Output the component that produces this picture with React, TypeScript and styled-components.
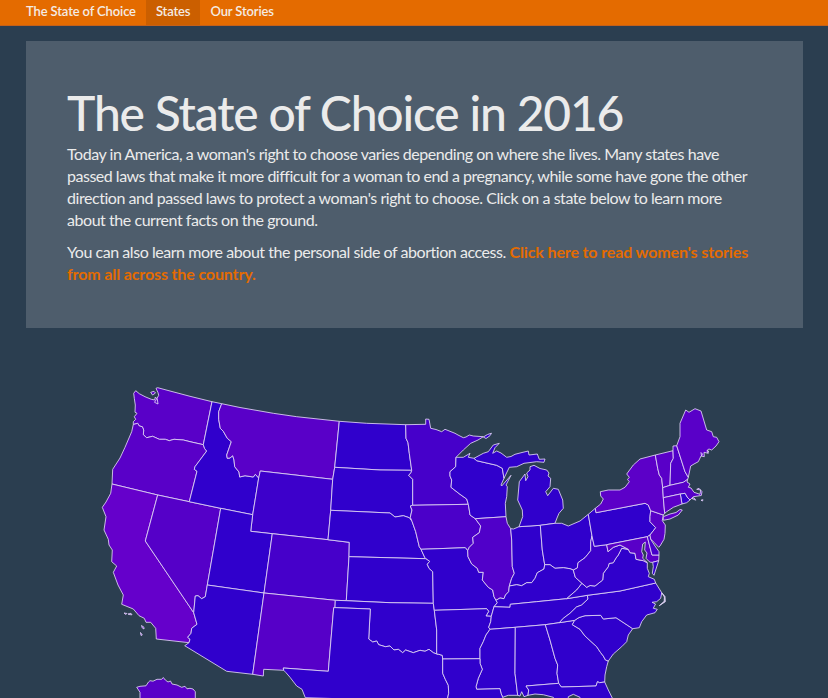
import React from "react";
import styled, { createGlobalStyle } from "styled-components";

const GlobalStyle = createGlobalStyle`
  * { box-sizing: border-box; }
  html, body { margin: 0; padding: 0; }
  body {
    background: #2b3e50;
    color: #ebebeb;
    font-family: Lato, "Liberation Sans", sans-serif;
    overflow: hidden;
  }
`;

const Page = styled.div`
  display: flex;
  flex-direction: column;
  width: 828px;
  height: 698px;
  overflow: hidden;
`;

const NavBar = styled.nav`
  display: flex;
  flex: none;
  height: 26px;
  padding-left: 16px;
  background: #e46b00;
  border-bottom: 1px solid #c4601a;
`;

const NavLink = styled.a<{ $active?: boolean }>`
  display: flex;
  align-items: center;
  height: 25px;
  padding: 0 10px 3px;
  font-size: 13px;
  font-weight: 600;
  letter-spacing: -0.13px;
  color: #f4ebe4;
  text-decoration: none;
  white-space: nowrap;
  background: ${(p) => (p.$active ? "#cb5f00" : "transparent")};
`;

const Jumbotron = styled.header`
  flex: none;
  width: 777px;
  height: 287px;
  margin: 15px 0 0 26px;
  padding: 47px 41px 0;
  background: #4e5d6c;
`;

const Title = styled.h1`
  margin: 0;
  font-size: 48px;
  line-height: 50px;
  font-weight: 500;
  letter-spacing: -1.18px;
  white-space: nowrap;
`;

const Lead = styled.p`
  margin: 0 0 11px;
  font-size: 16px;
  line-height: 21.7px;
  font-weight: 400;
  letter-spacing: -0.45px;
  &:first-of-type { margin-top: 5.4px; }
`;

const Line = styled.span<{ $tight?: boolean }>`
  display: block;
  white-space: nowrap;
  ${(p) => (p.$tight ? "letter-spacing: -0.49px;" : "")}
`;

const StoriesLink = styled.a`
  color: #e46b00;
  font-weight: 700;
  letter-spacing: -0.13px;
  text-decoration: none;
`;

const MapSvg = styled.svg`
  display: block;
  flex: none;
  width: 828px;
  height: 370px;
`;

/* Shared borders and coastlines; each state is a chain of these, "-" meaning reversed. */
const arcs: Record<string, string> = {
  waCoast: "133.3,424.5 133.3,421.7 135.7,419.3 134.3,416.7 137,413.3 135,412.3 135.3,405 134.3,398.3 133.7,393.3 135.7,390.7 139.3,393.7 145,396.7 151.3,399.3 154.7,400 155.3,397 157.3,399 158,404 154.5,402.3 156.3,399.5 158.7,395.3 158,392.7 156,388.3 157.7,387.7",
  waTop: "157.7,387.7 170,391 190,396.3 212,401.7",
  waId: "212,401.7 203.3,444.7",
  waOr: "133.3,424.5 137.7,423.3 139.3,426 142.3,426.7 143.7,430 143.3,434.7 146.7,437.7 152.7,436.3 159.3,439.3 165.3,439.3 169.3,440.7 174,439.3 183.3,440 190,441.7 203.3,444.7",
  orCoast: "133.3,424.5 131.7,431.7 125,447.3 120,458 112.7,469.3 112,484",
  orCa: "112,484 157.7,495",
  orNv: "157.7,495 189.3,501.7",
  orId: "203.3,444.7 204.7,448.7 206.7,451 200,460 195,466.7 194.3,469.3 197,471.3 189.3,501.7",
  idTop: "212,401.7 221.7,403.7",
  idMt: "221.7,403.7 218.7,411.7 218.7,419.3 220.3,428.3 223.3,431.3 227.3,438.3 231.3,441.7 226.7,455 227.3,458.3 230,458 232.7,455.7 234,460 234.7,466.7 239,472 239.7,477 245,475.7 253.3,477 255.3,474.3 258.7,478",
  mtWy: "258.7,478 260.3,471 332.7,479.3",
  idWy: "258.7,478 252.7,514.7",
  idNv: "189.3,501.7 220.7,508.3",
  idUt: "220.7,508.3 252.7,514.7",
  utWy: "252.7,514.7 250.7,531.3 272.3,533.7",
  wyCo: "272.3,533.7 328,539.7",
  mtTop: "221.7,403.7 240,407.5 273.3,413.3 296.7,416.7 339.3,421.3",
  mtNd: "339.3,421.3 334.7,467.3",
  mtSd: "334.7,467.3 332.7,479.3",
  wySd: "332.7,479.3 330.7,510.3",
  wyNe: "330.7,510.3 328,539.7",
  ndTop: "339.3,421.3 366.7,423.3 405.7,424.7",
  ndSd: "334.7,467.3 380,470 411.7,470.3",
  ndMn: "405.7,424.7 406,438.3 408,442.7 409.3,453.3 411.7,470.3",
  sdMn: "411.7,470.3 411,472.7 408.7,475.3 412.7,479.3 412.7,505.3",
  sdIa: "412.7,505.3 410.3,506 412,510 410.3,517.3 412,521.3",
  sdNe: "330.7,510.3 390,513 395,517 403.3,515.7 409.3,517.7 412,521.3",
  neIa: "412,521.3 415.7,531.7 419.3,546.7 421,549.3",
  neMo: "421,549.3 424.7,557.3 426,558.7",
  neCo: "328,539.7 349.3,542.3 349,556.7",
  neKs: "349,556.7 426,558.7",
  coKs: "349,556.7 346.3,600.7",
  ksMo: "426,558.7 429.7,561.3 427.3,564.3 429,568.3 432.7,571.7 433.3,603.3",
  ksOk: "346.3,600.7 390,602.7 433.3,603.3",
  coNm: "264,593 335.3,600.3",
  coOk: "335.3,600.3 346.3,600.7",
  utCo: "272.3,533.7 264,593",
  azNm: "264,593 252.7,674.3",
  nmOk: "335.3,600.3 335,607.6",
  nmTx: "335,607.6 333.7,607.7 328.3,671.3 283.3,668 283.7,670.3",
  nmSouth: "283.7,670.3 263.7,669.3 263.3,676 252.7,674.3",
  okTx: "335,607.6 370.3,609 368.7,639 372.7,642 376.7,641 378.7,644.7 385.3,646.7 390,646 394,650 398.3,649.3 402.7,652.7 405.7,650 413.3,652.7 420,650.3 425,651.3 429,649.3 433.3,652.7 436.7,654",
  okMo: "433.3,603.3 434.3,610.3",
  okAr: "434.3,610.3 436.7,630 436.7,654",
  txAr: "436.7,654 438.7,654.3 442.3,655.3 442.7,659",
  txLa: "442.7,659 442.7,673.3 445.3,679.3 448.3,685.3 448.7,693.3 446.7,702",
  txCoast: "283.7,670.3 286,672.7 290,677.3 296.7,686 302,689.3 305.3,697.7 306,702",
  moAr: "434.3,610.3 486.7,608.7 488.7,611.3 486,616 491.3,616.3",
  arLa: "442.7,659 480,658.7",
  arTn: "491.3,616.3 490.7,621.7 488.7,627.3 490,629.3",
  arMs: "490,629.3 486,635 483.3,641.7 480,648.3 480,658.7",
  msLa: "480,658.7 480,663.3 482.3,669.3 478.3,678.3 476,686.7 476.7,689.3 500,688.7 501,693.3 502.7,697.3",
  msAl: "515.3,627.3 515,673.3 517.7,695.3",
  msCoast: "502.7,697.3 508.3,695.3 517.7,695.3",
  tnMs: "490,629.3 515.3,627.3",
  tnAl: "515.3,627.3 545.3,624.7",
  tnGa: "545.3,624.7 559.3,622.7",
  alGa: "545.3,624.7 550,640 555,658.3 557.7,665 557,673.3 558.7,683.3",
  alFl: "558.7,683.3 526,686 528.7,690 528,695.3",
  alCoast: "517.7,695.3 520,696 521.7,691.7 524,696.7 528,695.3",
  gaFl: "558.7,683.3 561.3,687 596,686 597.5,681.7 599.5,682.7 604.7,682",
  gaCoast: "608.3,661 606.7,666.7 605,675 604.7,682",
  flCoast: "604.7,682 608.3,690 612.3,698 614,703 580,703 580,697.3 573.3,694.3 568.3,696.7 568,703 556,703 553.3,697.3 543.3,694.7 535,694 528,695.3",
  iaMo: "421,549.3 465.3,547.7 467.7,550.7",
  moIl: "467.7,550.7 468,556.7 471.7,564 477.3,568.3 478.7,572.3 483.3,572.3 482.3,580 488.3,587.3 492.7,590 494,596.7 496,600.3",
  moKy: "496,600.3 497.3,602.7 494,606.7",
  moTn: "494,606.7 491.3,616.3",
  ilKy: "496,600.3 500,598 504,598.7 505.5,595 508.7,591.7 509.3,586",
  ilIn: "510.7,528.7 511.7,540 512.3,566.7 514.3,573.3 511.7,578.3 509.3,586",
  inKy: "509.3,586 516.7,584.7 521.7,585.7 526.7,582.7 531.7,582.7 535,578.3 537.3,572.7 544,569 544.7,564.7",
  inOh: "540.3,525.3 542.3,550 544.7,564.7",
  ohKy: "544.7,564.7 550,564.7 555,568.3 563.3,567.7 570,568.7 573.3,570",
  ohWv: "573.3,570 577.3,568 578,562.7 585,557.7 590.7,550.7 590.7,541.7 592,536",
  ohPa: "588.3,514.3 592,536",
  paWv: "592,536 594.3,546.3 606.7,544.7",
  paMd: "606.7,544.7 647.3,536.7",
  paDe: "647.3,536.7 650,535",
  kyWv: "573.3,570 575.3,577.3 582,583.3",
  kyVa: "582,583.3 576.7,590 572,594 566.7,598.7",
  kyTn: "494,606.7 510,607.3 510.3,604.3 536.7,601.7 566.7,598.7",
  tnVa: "566.7,598.7 587.3,595.3",
  vaNc: "587.3,595.3 620,591 655.7,583",
  tnNc: "587.3,595.3 588,599 581.7,605 576.5,607 570,613.3 563.3,618.3 559.3,622.7",
  gaNc: "559.3,622.7 574.7,620.3",
  ncSc: "574.7,620.3 579,617.5 585,615.7 600.7,615.3 603.3,619 616,617.7 632.7,628.7",
  gaSc: "574.7,620.3 572.3,624.7 580,629.3 585,636 596.7,646.7 600.7,652.7 603.3,656 605.5,660 608.3,661",
  scCoast: "632.7,628.7 628.3,635 626.7,641.7 621.7,646.7 613.3,654 608.3,661",
  ncCoast: "655.7,583 661.7,592.7 660.7,598.3 656.7,601.7 652,602.3 655.5,604 653.3,608.3 657.3,609.3 655,612.7 646.7,615 641.7,621.7 639.3,627.7 632.7,628.7",
  wvVa: "582,583.3 586.7,587.3 590,585.5 595,586 602.7,580 603.3,573.3 608.3,566.7 609,563.5 613.3,562.7 616,558 618.3,555 621.7,548.3 628.3,549.3",
  wvMd: "606.7,544.7 608,551.7 613.3,547.3 620,545 628.3,549.3",
  mdVa: "628.3,549.3 630,552.7 635,553.3 636,559.3 643.3,560.7 647.3,562.7",
  bay: "647.3,562.7 642.7,558.3 643.3,555 641.7,551.7 642.7,544 645.3,542 644.7,550 647,553 646,558.3 649.3,561.7 650.7,562.3",
  mdDe: "647.3,536.7 652,555 659,555",
  deCoast: "650,535 650.7,539.3 655,546 659,551.7 659,555",
  mdCoast: "659,555 658.7,560.7",
  mdVaShore: "658.7,560.7 652.7,562.3 650.7,562.3",
  vaCoast: "647.3,562.7 647.3,568.3 649.3,573.3 648.3,576.7 654.3,579.3 655.7,583",
  paNj: "650.7,510.7 650,516.7 650,521.7 655.7,527.7 650,535",
  njNy: "650.7,510.7 663.3,515",
  njCoast: "663.3,515 662.3,520.7 665.3,525 665,533.3 664,539.3 660,546 658.7,547.3 654.3,542.7 650.7,539 650,535",
  nyPa: "596,512.7 645,503.3 648.3,505 650.7,510.7",
  paLake: "588.3,514.3 595.3,508.3 596,512.7",
  nyLake: "596,512.7 595.3,508.3 600.7,504 603.3,499 600.7,496 600.3,491.7 608.3,490 620,490 625,487.3 629.3,481.7 627.5,479.5 629.3,477.3 626.7,474 633.3,465 640,459 655.3,455",
  nyVt: "655.3,455 657.7,468.3 659.3,475 661.7,478.3 662.7,487.7",
  nyMa: "662.7,487.7 663.3,497.7",
  nyCt: "663.3,497.7 664.7,513.3",
  nyTip: "664.7,513.3 663.3,515",
  vtTop: "655.3,455 673,450.7",
  vtNh: "673,450.7 673.3,458.3 670.7,463.3 670,485.3",
  vtMa: "662.7,487.7 670,485.3",
  nhMa: "670,485.3 683.3,482.3 687.7,479.3",
  nhTop: "673,450.7 673,446 676.7,445.7",
  nhMe: "676.7,445.7 685,471.7 688.3,477.3",
  nhCoast: "688.3,477.3 687.7,479.3",
  meCoast: "676.7,445.7 680,436.7 680,423.3 685.7,410 689,412.3 695,408.7 701,411 706.7,430 711.7,431.7 713.3,436.7 716.7,437.3 719,441.7 716,446 711.7,450 709,449 707.3,450 708.3,453.3 704,452.3 704.3,456.7 701,456 698.3,461.7 694,464 690.7,466 688.3,477.3",
  maCoast: "687.7,479.3 687,482 690,484 688.3,487.3 691,488 694,492.3 700,494.3 700.7,490 696.7,489.3 699,488.3 702,491.7 701.3,495.5 693.3,496.7 690,500",
  maCt: "663.3,497.7 680.3,494",
  maRi: "680.3,494 685,493.3 687,497 690,500",
  riCt: "680.3,494 682,504",
  riCoast: "690,500 686.7,502.7 682,504",
  ctCoast: "682,504 673.3,507.3 666.7,511.7 664.7,513.3",
  ilWi: "475.3,518.7 506,516.7",
  wiLake: "506,516.7 505.3,503.3 506.7,496.7 507.3,486.7 506,485 511,475.3 501.7,486 501,485 504,478.3",
  wiMi: "504,478.3 502.3,468.3 496.7,465.3 476.7,460.7 474,458.3",
  wiSup: "474,458.3 468.3,457.3 470,453.3 463.3,457.3 456,457.3",
  wiMn: "456,457.3 455.7,466.7 450,471.7 450,476 451.7,480 451,487.3 460,494.3 466.7,499 468.3,504.3",
  wiIa: "468.3,504.3 469.3,510 470,515 475.3,518.7",
  iaIl: "475.3,518.7 480.7,526 479.3,532.7 472.7,537.3 473.3,543.3 469.3,547.3 467.7,550.7",
  iaMn: "412.7,505.3 468.3,504.3",
  mnTop: "405.7,424.7 425.7,424.3 425.7,419 429,419.3 430.7,428.3 436,429.5 441.7,431.7 445,429.3 455,433.3 458,435 463.3,437.7 466,437 469.3,435 473.3,436 483.3,436.7 478,440 470.7,443.3 463.3,450 456,457.3",
  miUpper: "474,458.3 483.3,453.3 488.3,451.7 493.3,445 499.3,443.3 495,447.7 492.7,453.3 496.7,451 501,453 506.7,457.3 511,456.5 515,454.3 522,452.5 528.3,451 529,455 537.3,454 539.3,459.3 545,459 544,462.3 536.7,461.7 524,463.3 516.7,466.7 509.3,467.3 504,478.3",
  miLower: "519,526.7 522.7,516.7 522.3,510 517.7,500 519.3,481.7 525,474 525.7,480.7 528,476.7 526.7,473 530,470 530,466.7 534,465.3 540,468.5 546.7,470 549,473 548,476 550.7,478.3 550,486.7 545.7,491.7 547.7,495.7 553.3,488.3 558.3,489.3 562.7,500 563.3,508.3 559,513.3 557,518 555,523.3",
  miIn: "519,526.7 540.3,525.3",
  miOh: "540.3,525.3 555,523.3",
  inLake: "510.7,528.7 513.5,529 519,526.7",
  ilLake: "506,516.7 507.3,523.3 510.7,528.7",
  ohLake: "555,523.3 561.7,523.3 568.3,526 580,521 588.3,514.3",
  caCoast: "112,484 110.7,493.3 106,502 102.3,507.3 106,516.7 104,530 108.3,539.3 109,545 112.3,550 111.7,561.7 116.7,566 113.3,572.3 118,585 123.3,595 121.7,604.3 133.3,609 139,615.7 144.3,618.3 146,622.3 150.7,622.3 155.7,628.3 156.3,639 189,642.7",
  caNv: "157.7,495 145.3,541 193.7,612.7",
  caAz: "193.7,612.7 197,624.3 191.7,628.3 191,633.3 187.7,637.3 190,639.3 189,642.7",
  nvAz: "193.7,612.7 195.3,596 198,595.7 201.7,598.7 205.3,596.7 207.3,585",
  nvUt: "220.7,508.3 207.3,585",
  utAz: "207.3,585 264,593",
  azSouth: "189,642.7 184.7,645.7 226.7,671.3 252.7,674.3",
};

const BLUE = "#3000cc";

const states: { id: string; fill: string; ring: string }[] = [
  { id: "WA", fill: "#5900c8", ring: "waCoast waTop waId -waOr" },
  { id: "OR", fill: "#5900c8", ring: "waOr orId -orNv -orCa -orCoast" },
  { id: "CA", fill: "#6500cb", ring: "orCa caNv caAz -caCoast" },
  { id: "NV", fill: "#5500c8", ring: "orNv idNv nvUt -nvAz -caNv" },
  { id: "ID", fill: BLUE, ring: "idTop idMt idWy -idUt -idNv -orId -waId" },
  { id: "MT", fill: "#5900c8", ring: "mtTop mtNd mtSd -mtWy -idMt" },
  { id: "WY", fill: "#3d00cb", ring: "mtWy wySd wyNe -wyCo -utWy -idWy" },
  { id: "UT", fill: BLUE, ring: "idUt utWy utCo -utAz -nvUt" },
  { id: "AZ", fill: BLUE, ring: "utAz azNm -azSouth -caAz nvAz" },
  { id: "CO", fill: "#4600ca", ring: "wyCo neCo coKs -coOk -coNm -utCo" },
  { id: "NM", fill: "#5600c8", ring: "coNm nmOk nmTx nmSouth -azNm" },
  { id: "ND", fill: BLUE, ring: "ndTop ndMn -ndSd -mtNd" },
  { id: "SD", fill: BLUE, ring: "ndSd sdMn sdIa -sdNe -wySd -mtSd" },
  { id: "NE", fill: BLUE, ring: "sdNe neIa neMo -neKs -neCo -wyNe" },
  { id: "KS", fill: BLUE, ring: "neKs ksMo -ksOk -coKs" },
  { id: "OK", fill: BLUE, ring: "coOk ksOk okMo okAr -okTx -nmOk" },
  { id: "TX", fill: BLUE, ring: "okTx txAr txLa -txCoast -nmTx" },
  { id: "MN", fill: "#4600ca", ring: "mnTop wiMn -iaMn -sdMn -ndMn" },
  { id: "IA", fill: "#4b00c9", ring: "iaMn wiIa iaIl -iaMo -neIa -sdIa" },
  { id: "MO", fill: BLUE, ring: "iaMo moIl moKy moTn -moAr -okMo -ksMo -neMo" },
  { id: "AR", fill: BLUE, ring: "moAr arTn arMs -arLa -txAr -okAr" },
  { id: "WI", fill: BLUE, ring: "-wiSup -wiMi -wiLake -ilWi -wiIa -wiMn" },
  { id: "IL", fill: "#5000c9", ring: "ilWi ilLake ilIn -ilKy -moIl -iaIl" },
  { id: "IN", fill: BLUE, ring: "inLake miIn inOh -inKy -ilIn" },
  { id: "MI-U", fill: BLUE, ring: "miUpper wiMi" },
  { id: "MI-L", fill: BLUE, ring: "miLower -miOh -miIn" },
  { id: "OH", fill: BLUE, ring: "miOh ohLake ohPa -ohWv -ohKy -inOh" },
  { id: "KY", fill: BLUE, ring: "inKy ohKy kyWv kyVa -kyTn -moKy ilKy" },
  { id: "TN", fill: BLUE, ring: "kyTn tnVa tnNc -tnGa -tnAl -tnMs -arTn -moTn" },
  { id: "MS", fill: BLUE, ring: "tnMs msAl -msCoast -msLa -arMs" },
  { id: "AL", fill: BLUE, ring: "tnAl alGa alFl -alCoast -msAl" },
  { id: "GA", fill: BLUE, ring: "tnGa gaNc gaSc gaCoast -gaFl -alGa" },
  { id: "FL", fill: BLUE, ring: "gaFl flCoast -alFl" },
  { id: "SC", fill: BLUE, ring: "ncSc scCoast -gaSc" },
  { id: "NC", fill: BLUE, ring: "vaNc ncCoast -ncSc -gaNc -tnNc" },
  { id: "VA", fill: BLUE, ring: "wvVa mdVa vaCoast -vaNc -tnVa -kyVa" },
  { id: "WV", fill: "#3d00cb", ring: "paWv wvMd -wvVa -kyWv ohWv" },
  { id: "PA", fill: BLUE, ring: "paLake nyPa paNj -paDe -paMd -paWv -ohPa" },
  { id: "MD", fill: "#5900c8", ring: "paMd mdDe mdCoast mdVaShore -bay -mdVa -wvMd" },
  { id: "DE", fill: "#4600ca", ring: "paDe deCoast -mdDe" },
  { id: "NJ", fill: "#5900c8", ring: "njNy njCoast -paNj" },
  { id: "NY", fill: "#5c00c8", ring: "nyLake nyVt nyMa nyCt nyTip -njNy -nyPa" },
  { id: "VT", fill: "#5900c8", ring: "vtTop vtNh -vtMa -nyVt" },
  { id: "NH", fill: "#5000c9", ring: "nhTop nhMe nhCoast -nhMa -vtNh" },
  { id: "ME", fill: "#5900c8", ring: "meCoast -nhMe" },
  { id: "MA", fill: "#5600c8", ring: "vtMa nhMa maCoast -maRi -maCt -nyMa" },
  { id: "RI", fill: BLUE, ring: "maRi riCoast -riCt" },
  { id: "CT", fill: "#5c00c8", ring: "maCt riCt ctCoast -nyCt" },
];

const louisiana = "M442.7,659L480,658.7L480,663.3L482.3,669.3L478.3,678.3L476,686.7L476.7,689.3L500,688.7L501,693.3L502.7,697.3L504,703L446.7,702L448.7,693.3L448.3,685.3L445.3,679.3L442.7,673.3Z";

const islands: { d: string; fill: string }[] = [
  { fill: "#5900c8", d: "M140,703L140,697L140,692.3L138.5,690L136.7,687.3L140,686.3L146,685.8L148.5,682L150,680.7L153,681.2L157,679.3L161.7,679.3L163.3,677.5L165.3,680L168,682L170.5,681L172,684L177,685L181.7,687.3L185,686.3L187,688.8L190,688.3L193,689L195.3,691.7L195.3,703Z" },
  { fill: "#5c00c8", d: "M663.3,516.7L670,514L676,512.5L680,509.5L682.3,510L678.3,515L670,519L663.3,520.3Z" },
  { fill: BLUE, d: "M658.7,560.7L655.7,570L654,575.3L652.3,573.3L653.3,566.7L652.7,562.3Z" },
  { fill: "#6500cb", d: "M124,613L127,613.5L126,614.5ZM128,614L131,613.3L132,614.8L129,614.5Z" },
  { fill: "#6500cb", d: "M141.5,625.5L144,627.3L144,629L142.3,628ZM140.5,632.5L142.3,635L141,635.5Z" },
  { fill: "#5900c8", d: "M150.7,392.3L154,391.3L155.5,393L152.5,395Z" },
  { fill: BLUE, d: "M483.3,437L487.5,434.5L491.5,433.2L490,435.7L486,438.5Z" },
  { fill: "#d9ccf2", d: "M661.7,592.7L665,596.5L665.3,601.7L659.3,605.7L664.2,601.3L664.4,597Z" },
  { fill: "#5600c8", d: "M692,498.5L694,497.7L695.7,500.2ZM701,500.2L703,499.7L702.5,501Z" },
  { fill: "#5900c8", d: "M701,452.5L702.5,454L701.5,456ZM707,450.5L709,451.5L707.5,452.5Z" },
];

function ringPath(ring: string): string {
  const pts: string[] = [];
  ring.split(" ").forEach((key) => {
    const list = arcs[key.replace("-", "")].split(" ");
    if (key.startsWith("-")) list.reverse();
    pts.push(...(pts.length ? list.slice(1) : list));
  });
  return `M${pts.join("L")}Z`;
}

const navItems = [
  { label: "The State of Choice" },
  { label: "States", active: true },
  { label: "Our Stories" },
];

export default function App() {
  return (
    <Page>
      <GlobalStyle />
      <NavBar>
        {navItems.map((item) => (
          <NavLink key={item.label} $active={item.active}>{item.label}</NavLink>
        ))}
      </NavBar>
      <Jumbotron>
        <Title>The State of Choice in 2016</Title>
        <Lead>
          <Line>Today in America, a woman's right to choose varies depending on where she lives. Many states have</Line>
          <Line $tight>passed laws that make it more difficult for a woman to end a pregnancy, while some have gone the other</Line>
          <Line>direction and passed laws to protect a woman's right to choose. Click on a state below to learn more</Line>
          <Line>about the current facts on the ground.</Line>
        </Lead>
        <Lead>
          <Line>
            You can also learn more about the personal side of abortion access.{" "}
            <StoriesLink>Click here to read women's stories</StoriesLink>
          </Line>
          <Line><StoriesLink>from all across the country.</StoriesLink></Line>
        </Lead>
      </Jumbotron>
      <MapSvg viewBox="0 328 828 370" role="img" aria-label="Map of the United States">
        <g stroke="#e0d5f5" strokeWidth="0.85" strokeLinejoin="round">
          {states.map((s) => <path key={s.id} d={ringPath(s.ring)} fill={s.fill} />)}
          <path d={louisiana} fill={BLUE} />
          {islands.map((i) => <path key={i.d} d={i.d} fill={i.fill} />)}
        </g>
      </MapSvg>
    </Page>
  );
}
